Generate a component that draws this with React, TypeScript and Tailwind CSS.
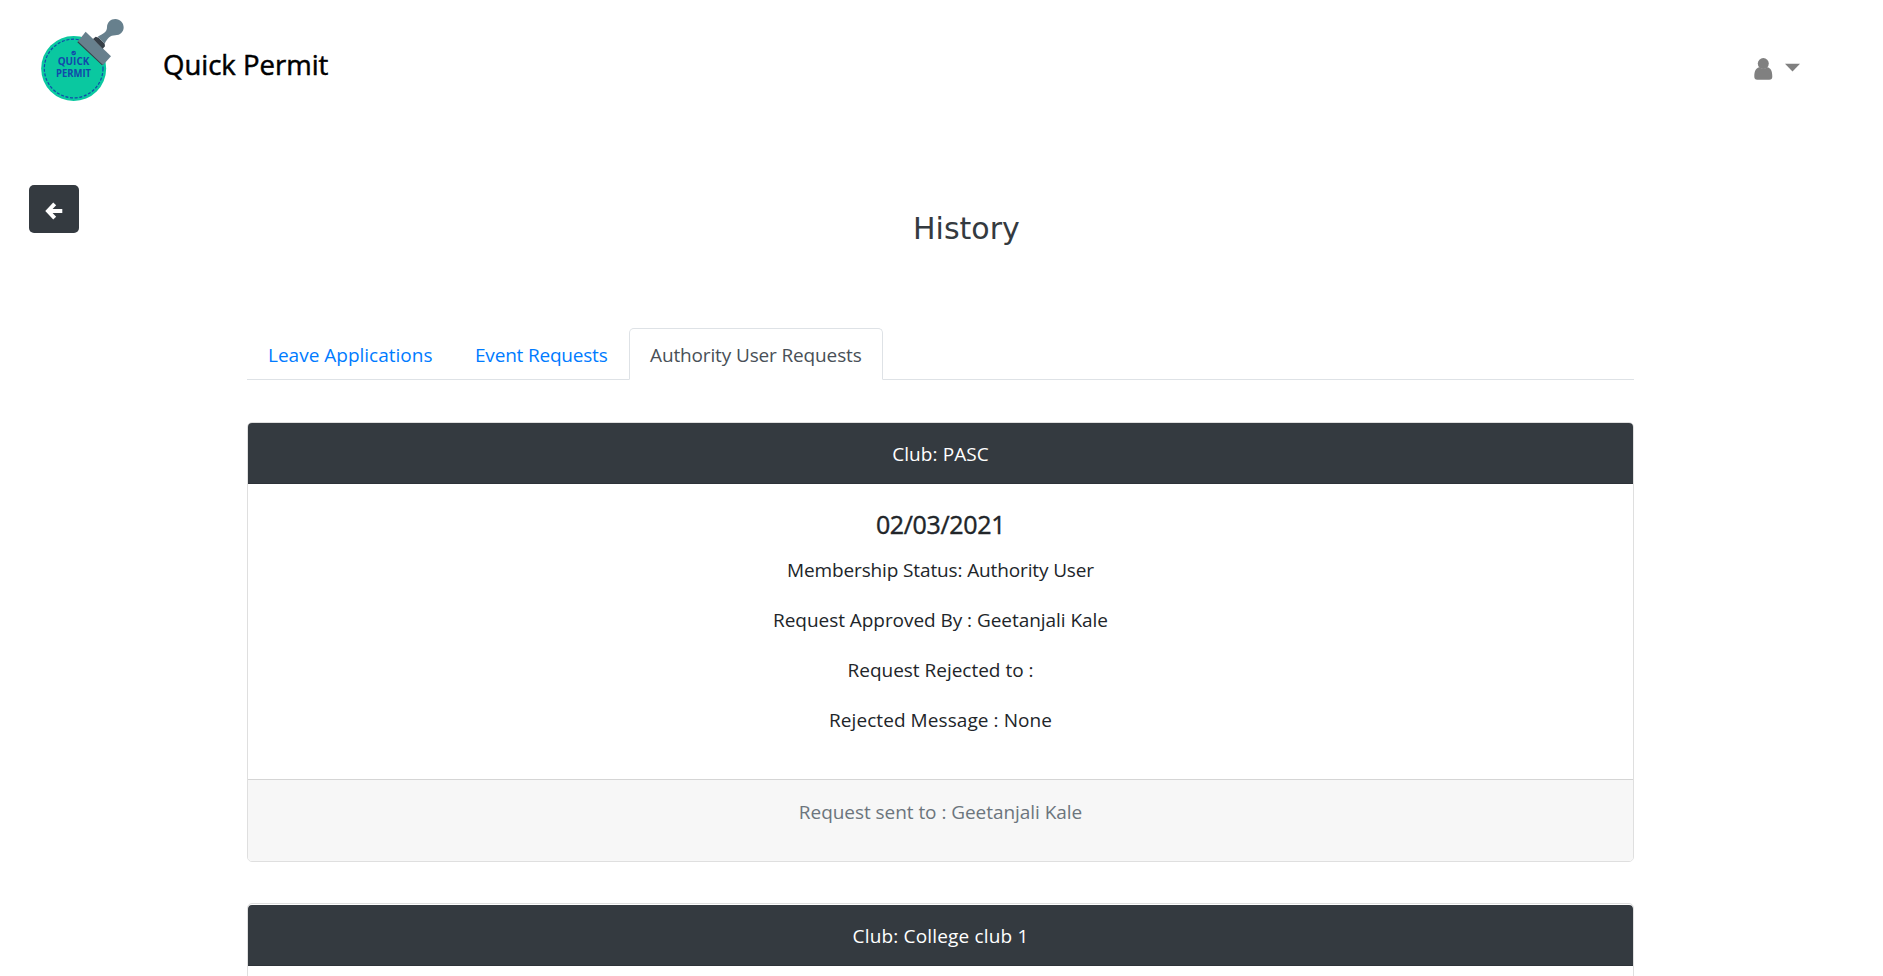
import React from "react";

type Line = { text: string; spacing: string };

function Logo() {
  return (
    <svg width="110" height="100" viewBox="0 0 330 300" aria-label="Quick Permit logo">
      <circle cx="131" cy="175.500" r="97.500" fill="#0ac8a0" />
      <circle cx="131" cy="175.500" r="88" fill="none" stroke="#1249ab" strokeWidth="3.600" strokeDasharray="9 5" />
      <g fill="#1249ab" fontFamily="'Open Sans', sans-serif" fontWeight="700" fontSize="31">
        <circle cx="131" cy="129" r="7" />
        <path d="M127.500 129l3 3 5-6" fill="none" stroke="#0ac8a0" strokeWidth="2" />
        <text x="83" y="166" textLength="95" lengthAdjust="spacingAndGlyphs">QUICK</text>
        <text x="78" y="200" textLength="105" lengthAdjust="spacingAndGlyphs">PERMIT</text>
      </g>
      <path d="M142 97l6-6 74 68-6 7z" fill="#363f47" />
      <path d="M167 65l76 74-24 26-75-71z" fill="#67808d" />
      <path d="M189 87l8-7 9 3 18 18 1 8-7 7z" fill="#363f47" />
      <path d="M203 80C221 72 231 65 231 52C231 37 242 27 256 27C270 27 281 38 281 52C281 66 270 76 256 76C240 76 232 86 224 101z" fill="#67808d" />
    </svg>
  );
}

function Header() {
  return (
    <header className="flex h-[135px] items-start justify-between pl-[30px] pr-[83px]">
      <div className="flex pt-[10px]">
        <Logo />
        <h1 className="ml-[23px] mt-[36px] text-[27.5px] leading-[38px] font-medium text-black [-webkit-text-stroke:0.5px_black]">
          Quick Permit
        </h1>
      </div>
      <button className="mt-[58px] flex" aria-label="Account">
        <svg width="46" height="22" viewBox="0 0 46 22" fill="#808080">
          <path d="M5.500 9.200C2 9.700.300 13 .300 18.500Q.300 21.800 3.300 21.800H15.300Q18.300 21.800 18.300 18.500C18.300 13 16.800 9.700 13.100 9.200Q9.300 12.300 5.500 9.200z" />
          <circle cx="9.300" cy="5.600" r="5.500" />
          <path d="M31 5.800h15l-7.500 7.800z" />
        </svg>
      </button>
    </header>
  );
}

function TitleRow() {
  return (
    <div className="flex h-[193px] items-start pl-[29px] pt-[50px]">
      <button className="flex h-12 w-[50px] items-center justify-center rounded-[5px] bg-[#343a40] pt-[3px]" aria-label="Back">
        <svg width="18" height="18" viewBox="0 0 18 18" fill="none" stroke="#fff" strokeWidth="4">
          <path d="M9.700 1.800L3 9l6.700 7.200M3.500 9H17.300" strokeLinejoin="miter" />
        </svg>
      </button>
      <h2 className="ml-[834px] mt-[26px] font-['DejaVu_Sans',sans-serif] text-[30px] leading-9 text-[#343a40]">
        History
      </h2>
    </div>
  );
}

function Tabs() {
  return (
    <nav className="flex h-[52px] border-b border-[#dee2e6] text-[19px] leading-[30px] text-[#007bff]">
      <a className="h-[52px] w-[207px] whitespace-nowrap pl-[21px] pt-[12px]">Leave Applications</a>
      <a className="h-[52px] w-[175px] whitespace-nowrap pl-[21px] pt-[12px] tracking-[-0.196px]">Event Requests</a>
      <a className="h-[52px] w-[254px] whitespace-nowrap rounded-t-[5px] border border-[#dee2e6] border-b-white bg-white pl-[20px] pt-[11px] tracking-[-0.139px] text-[#495057]">
        Authority User Requests
      </a>
    </nav>
  );
}

function CardHeader({ children, className }: { children: string; className: string }) {
  return (
    <div className={`h-[61px] border-b border-[#2d3238] bg-[#343a40] pt-[16px] text-white ${className}`}>
      {children}
    </div>
  );
}

const lines: Line[] = [
  { text: "Membership Status: Authority User", spacing: "tracking-[-0.132px]" },
  { text: "Request Approved By : Geetanjali Kale", spacing: "tracking-[-0.046px]" },
  { text: "Request Rejected to :", spacing: "tracking-[-0.010px]" },
  { text: "Rejected Message : None", spacing: "tracking-[0.076px]" },
];

export default function App() {
  return (
    <div className="h-[976px] overflow-hidden bg-white font-['Open_Sans',sans-serif] text-[#212529]">
      <Header />
      <TitleRow />
      <main className="ml-[247px] w-[1387px]">
        <Tabs />
        <section className="mt-[42px] h-[440px] overflow-hidden rounded-[5px] border border-[#dfdfdf] text-center text-[19px] leading-[30px]">
          <CardHeader className="tracking-[0.086px]">Club: PASC</CardHeader>
          <div className="h-[295px] pt-[25px]">
            <h5 className="mb-[16px] text-[25px] leading-[30px] font-medium tracking-[-0.35px] [-webkit-text-stroke:0.4px_#212529]">
              02/03/2021
            </h5>
            {lines.map((line) => (
              <p key={line.text} className={`mb-5 ${line.spacing}`}>{line.text}</p>
            ))}
          </div>
          <div className="h-[82px] border-t border-[#d5d5d5] bg-[#f7f7f7] pt-[17px] tracking-[-0.049px] text-[#6c757d]">
            Request sent to : Geetanjali Kale
          </div>
        </section>
        <section className="mt-[41px] h-[440px] overflow-hidden rounded-[5px] border border-[#dfdfdf] pt-px text-center text-[19px] leading-[30px]">
          <CardHeader className="rounded-t-[4px] tracking-[0.17px]">Club: College club 1</CardHeader>
        </section>
      </main>
    </div>
  );
}
